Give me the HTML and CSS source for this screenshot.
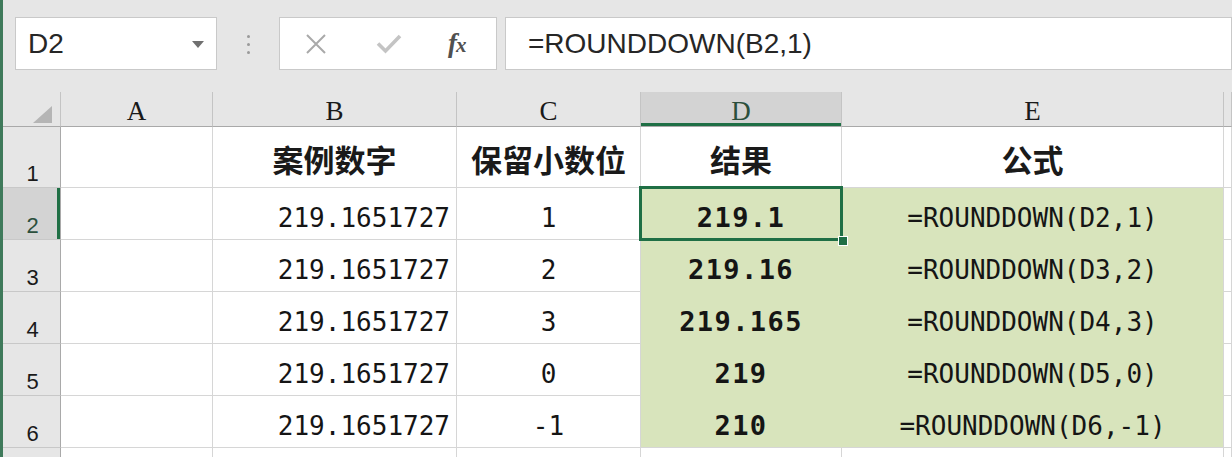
FILE: index.html
```html
<!DOCTYPE html>
<html>
<head>
<meta charset="utf-8">
<link rel="stylesheet" href="styles.css">
</head>
<body>

<div class="app">
  <div class="toolbar">
    <div class="namebox">
      <span>D2</span>
      <svg width="12" height="7" viewBox="0 0 12 7"><path d="M0 0H12L6 7Z" fill="#707070"/></svg>
    </div>
    <div class="grip"><i></i><i></i><i></i></div>
    <div class="fxbox">
      <svg class="ico-x" width="22" height="22" viewBox="0 0 22 22"><path d="M2 2L20 20M20 2L2 20" stroke="#a9a9a9" stroke-width="2" fill="none"/></svg>
      <svg class="ico-ok" width="26" height="21" viewBox="0 0 26 21"><path d="M2 10.5L9.5 18L24 3" stroke="#c4c4c4" stroke-width="3.6" fill="none"/></svg>
      <span class="fx"><i>f</i><i class="x">x</i></span>
    </div>
    <div class="formula"><span>=ROUNDDOWN(B2,1)</span></div>
  </div>

  <div class="sheet">
    <!-- column headers -->
    <div class="c h corner"><svg width="19" height="17" viewBox="0 0 19 17"><path d="M19 0V17H0Z" fill="#b5b5b5"/></svg></div>
    <div class="c h">A</div>
    <div class="c h">B</div>
    <div class="c h">C</div>
    <div class="c h sel">D</div>
    <div class="c h">E</div>
    <div class="c h"></div>

    <!-- row 1 -->
    <div class="c r">1</div>
    <div class="c"></div>
    <div class="c title">案例数字</div>
    <div class="c title">保留小数位</div>
    <div class="c title">结果</div>
    <div class="c title">公式</div>
    <div class="c"></div>

    <!-- row 2 -->
    <div class="c r sel">2</div>
    <div class="c"></div>
    <div class="c num right">219.1651727</div>
    <div class="c num">1</div>
    <div class="c num res g active">219.1<span class="handle"></span></div>
    <div class="c num g ge">=ROUNDDOWN(D2,1)</div>
    <div class="c"></div>

    <!-- row 3 -->
    <div class="c r">3</div>
    <div class="c"></div>
    <div class="c num right">219.1651727</div>
    <div class="c num">2</div>
    <div class="c num res g">219.16</div>
    <div class="c num g ge">=ROUNDDOWN(D3,2)</div>
    <div class="c"></div>

    <!-- row 4 -->
    <div class="c r">4</div>
    <div class="c"></div>
    <div class="c num right">219.1651727</div>
    <div class="c num">3</div>
    <div class="c num res g">219.165</div>
    <div class="c num g ge">=ROUNDDOWN(D4,3)</div>
    <div class="c"></div>

    <!-- row 5 -->
    <div class="c r">5</div>
    <div class="c"></div>
    <div class="c num right">219.1651727</div>
    <div class="c num">0</div>
    <div class="c num res g">219</div>
    <div class="c num g ge">=ROUNDDOWN(D5,0)</div>
    <div class="c"></div>

    <!-- row 6 -->
    <div class="c r">6</div>
    <div class="c"></div>
    <div class="c num right">219.1651727</div>
    <div class="c num">-1</div>
    <div class="c num res g last">210</div>
    <div class="c num g ge last">=ROUNDDOWN(D6,-1)</div>
    <div class="c"></div>

    <!-- row 7, only its top edge shows -->
    <div class="c r"></div>
    <div class="c"></div>
    <div class="c"></div>
    <div class="c"></div>
    <div class="c"></div>
    <div class="c"></div>
    <div class="c"></div>
  </div>
</div>

</body>
</html>
```

FILE: styles.css
```css
body {
  margin: 0;
  background: #e6e6e6;
  font-family: "Liberation Sans", Arial, sans-serif;
  color: #1a1a1a;
}

.app {
  width: 1232px;
  height: 457px;
  overflow: hidden;
  box-sizing: border-box;
  border-left: 3px solid #3f7a5b;
  background: #e6e6e6;
}

/* formula bar */
.toolbar {
  height: 92px;
  display: flex;
  align-items: flex-start;
  padding: 17px 0 0 12px;
  box-sizing: border-box;
}

.namebox, .fxbox, .formula {
  height: 53px;
  box-sizing: border-box;
  background: #fff;
  border: 1px solid #c9c9c9;
  display: flex;
  align-items: center;
}

.namebox {
  width: 202px;
  justify-content: space-between;
  padding: 0 12px 0 12px;
  font-size: 28px;
  color: #262626;
}

.namebox svg {
  margin-top: 2px;
}

.grip {
  width: 62px;
  display: flex;
  flex-direction: column;
  align-items: center;
  gap: 5px;
  padding-top: 18px;
  box-sizing: border-box;
  height: 53px;
}

.grip i {
  width: 3px;
  height: 3px;
  border-radius: 50%;
  background: #9a9a9a;
}

.fxbox {
  width: 218px;
  padding-left: 25px;
}

.ico-x {
  margin-right: 49px;
}

.ico-ok {
  margin-right: 46px;
}

.fx {
  font-family: "Liberation Serif", serif;
  font-size: 27px;
  font-weight: bold;
  color: #505050;
  letter-spacing: -1px;
}

.fx .x {
  font-size: 21px;
}

.formula {
  flex: 1;
  margin-left: 8px;
  padding-left: 22px;
  font-size: 28px;
  color: #262626;
}

/* grid */
.sheet {
  display: grid;
  grid-template-columns: 58px 152px 244px 184px 201px 382px 1fr;
  grid-template-rows: 35px 61px 52px 52px 52px 52px 52px 52px;
  background: #fff;
}

.c {
  box-sizing: border-box;
  border-right: 1px solid #d6d6d6;
  border-bottom: 1px solid #d6d6d6;
  display: flex;
  align-items: center;
  justify-content: center;
  position: relative;
}

.h {
  background: #e6e6e6;
  border-right-color: #c4c4c4;
  border-bottom-color: #a9a9a9;
  font-family: "Liberation Serif", serif;
  font-size: 27px;
  padding-top: 5px;
}

.h.sel {
  background: #d3d3d3;
  color: #2b4f3c;
  box-shadow: inset 0 -3px 0 #1f6f45;
}

.corner {
  justify-content: flex-end;
  padding: 10px 8px 0 0;
}

.r {
  background: #e6e6e6;
  border-right-color: #a9a9a9;
  border-bottom-color: #c8c8c8;
  font-size: 22px;
  align-items: flex-end;
  padding: 0 0 2px 2px;
  line-height: 1;
}

.r.sel {
  background: #d3d3d3;
  color: #2b4f3c;
  box-shadow: inset -3px 0 0 #1f6f45;
}

.title {
  font-family: "Noto Sans CJK SC", sans-serif;
  font-weight: bold;
  font-size: 31px;
  line-height: 1;
  padding-top: 3px;
}

.num {
  font-family: "DejaVu Sans Mono", monospace;
  font-size: 26px;
  line-height: 1;
  padding-top: 8px;
  color: #151515;
}

.right {
  justify-content: flex-end;
  padding-right: 6px;
}

.res {
  font-weight: bold;
  font-size: 27px;
  letter-spacing: 1.4px;
}

.g {
  background: #d8e4bc;
  border-color: #d8e4bc;
}

.ge {
  border-right-color: #d6d6d6;
}

.g.last {
  border-bottom-color: #d6d6d6;
}

.active {
  z-index: 3;
}

.active::after {
  content: "";
  position: absolute;
  left: -2px;
  top: -2px;
  right: -2px;
  bottom: -2px;
  border: 3px solid #1f6f45;
}

.handle {
  position: absolute;
  right: -7px;
  bottom: -7px;
  width: 8px;
  height: 8px;
  background: #1f6f45;
  border: 1px solid #fff;
  z-index: 2;
}
```
